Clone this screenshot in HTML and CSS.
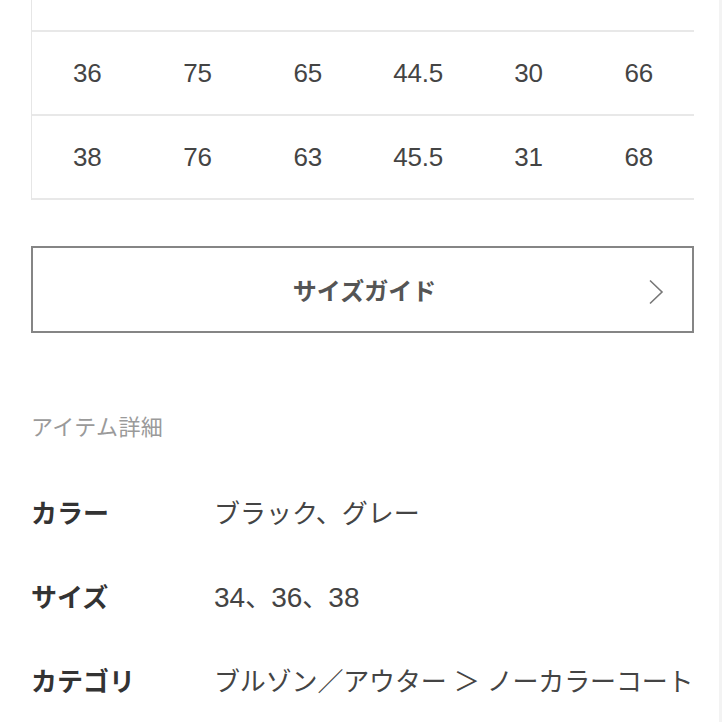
FILE: index.html
```html
<!DOCTYPE html>
<html lang="ja">
<head>
<meta charset="utf-8">
<link rel="stylesheet" href="styles.css">
</head>
<body>
<div class="page">
  <div class="size-table">
    <div class="row"><span>34</span><span>74</span><span>64</span><span>43.5</span><span>29</span><span>64</span></div>
    <div class="row"><span>36</span><span>75</span><span>65</span><span>44.5</span><span>30</span><span>66</span></div>
    <div class="row"><span>38</span><span>76</span><span>63</span><span>45.5</span><span>31</span><span>68</span></div>
  </div>

  <a class="guide-btn">
    <span class="guide-label">サイズガイド</span>
    <svg class="chev" width="16" height="26" viewBox="0 0 16 26"><path d="M2 1.5 L14 13 L2 24.5" fill="none" stroke="#777" stroke-width="1.6"/></svg>
  </a>

  <div class="section-title">アイテム詳細</div>

  <dl class="details">
    <div class="drow"><dt>カラー</dt><dd>ブラック、グレー</dd></div>
    <div class="drow"><dt>サイズ</dt><dd><span class="num">34</span>、<span class="num">36</span>、<span class="num">38</span></dd></div>
    <div class="drow"><dt>カテゴリ</dt><dd class="cat">ブルゾン／アウター ＞ ノーカラーコート</dd></div>
  </dl>
</div>
</body>
</html>
```

FILE: styles.css
```css
html, body {
  margin: 0;
  padding: 0;
  background: #fff;
}
body {
  font-family: "Liberation Sans", "Noto Sans CJK JP", sans-serif;
  color: #333;
  overflow: hidden;
  height: 722px;
  border-right: 3px solid #f3f3f3;
  box-sizing: border-box;
}
.page {
  padding: 0 25px 0 31px;
}
.size-table {
  margin-top: -52px;
  border-left: 1px solid #e6e6e6;
}
.row {
  display: grid;
  grid-template-columns: repeat(6, 1fr);
  height: 82px;
  border-bottom: 2px solid #e8e8e8;
  align-items: center;
}
.row span {
  text-align: center;
  font-size: 26px;
  color: #444;
  letter-spacing: -0.2px;
}
.guide-btn {
  margin-top: 46px;
  height: 83px;
  border: 2px solid #858585;
  display: flex;
  align-items: center;
  justify-content: center;
  position: relative;
}
.guide-label {
  font-size: 24px;
  font-weight: bold;
  color: #555;
  margin-left: 4px;
}
.chev {
  position: absolute;
  right: 28px;
  top: 31px;
}
.section-title {
  margin-top: 80px;
  font-size: 22px;
  letter-spacing: 0.4px;
  line-height: 30px;
  color: #9a9a9a;
}
.details {
  margin: 26px 0 0;
}
.drow {
  display: flex;
  height: 84px;
  align-items: center;
}
.drow dt {
  width: 183px;
  font-size: 26px;
  font-weight: bold;
  color: #333;
}
.drow dd {
  margin: 0;
  font-size: 26px;
  color: #444;
  white-space: nowrap;
}
.drow dd.cat {
  letter-spacing: -0.15px;
}
.num {
  font-size: 28px;
}
```
